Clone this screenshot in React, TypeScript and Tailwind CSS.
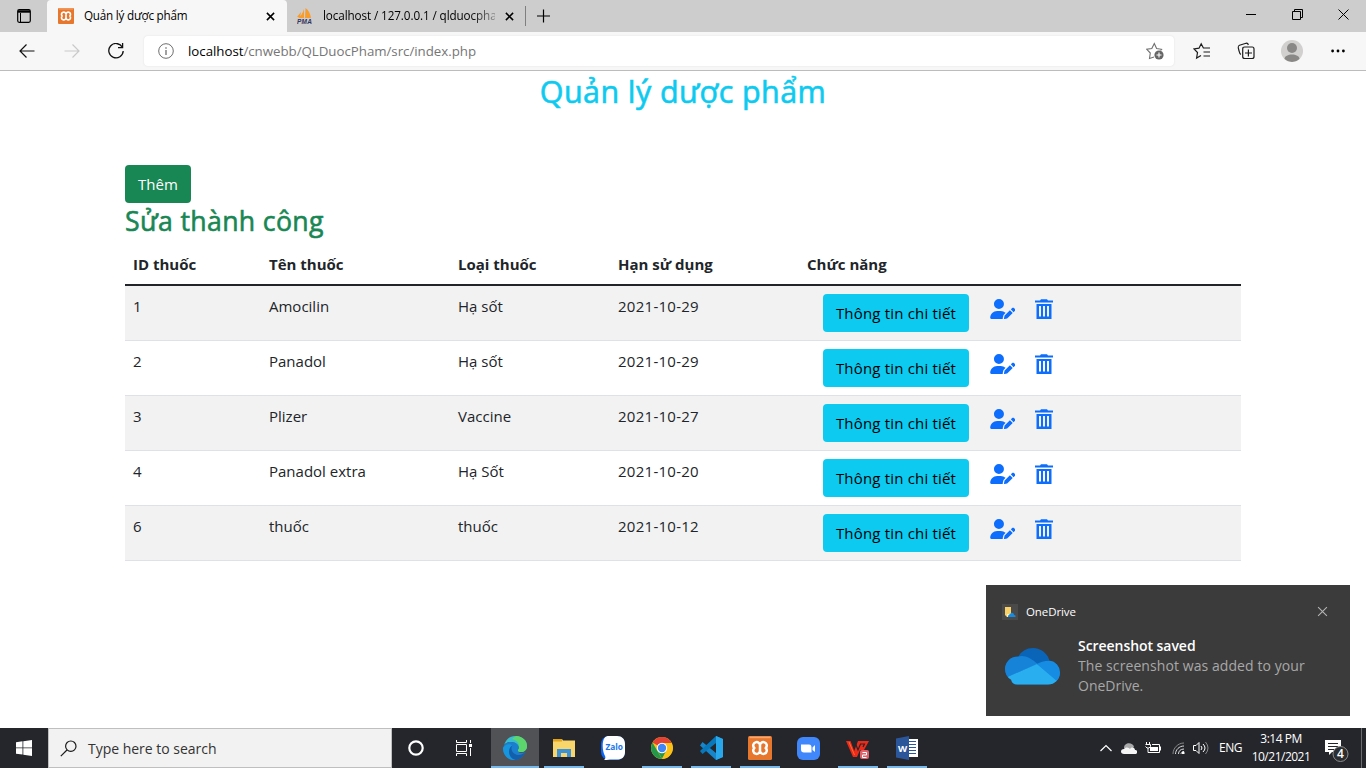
import React from 'react';
import { FaUserPen } from 'react-icons/fa6';

const rows = [
  { id: '1', name: 'Amocilin', kind: 'Hạ sốt', date: '2021-10-29' },
  { id: '2', name: 'Panadol', kind: 'Hạ sốt', date: '2021-10-29' },
  { id: '3', name: 'Plizer', kind: 'Vaccine', date: '2021-10-27' },
  { id: '4', name: 'Panadol extra', kind: 'Hạ Sốt', date: '2021-10-20' },
  { id: '6', name: 'thuốc', kind: 'thuốc', date: '2021-10-12' },
];

const columns = 'grid grid-cols-[136px_189px_160px_189px_1fr]';

function XamppIcon({ className }: { className: string }) {
  return (
    <svg className={className} viewBox="0 0 24 24">
      <rect width="24" height="24" rx="1.5" fill="#e8772e" />
      <rect x="1.5" y="0.6" width="21" height="1.6" fill="#f6a873" />
      <path
        d="M12 10A3.400 3.400 0 1 0 6.300 12A3.400 3.400 0 1 0 12 14A3.400 3.400 0 1 0 17.700 12A3.400 3.400 0 1 0 12 10v4"
        fill="none"
        stroke="#fff"
        strokeWidth="2.500"
        strokeLinejoin="round"
      />
    </svg>
  );
}

function CloseIcon({ className }: { className: string }) {
  return (
    <svg className={className} viewBox="0 0 10 10" fill="none" stroke="currentColor">
      <path d="M1 1l8 8M9 1l-8 8" />
    </svg>
  );
}

function TrashIcon() {
  return (
    <svg className="ml-5 h-5 w-[18px]" viewBox="0 0 18 20" fill="#0d6efd">
      <path d="M6 .3h6l1 1.200h5v2H0v-2h5zM1.500 5h15v15h-15zM4 7v10.500h2V7zm4 0v10.500h2V7zm4 0v10.500h2V7z" fillRule="evenodd" />
    </svg>
  );
}

function TabBar() {
  return (
    <div className="flex h-8 shrink-0 bg-[#cdcdcd] text-black">
      <div className="flex w-[47px] shrink-0 items-center pl-[17px]">
        <svg className="h-[14px] w-[14px]" viewBox="0 0 14 14" fill="none" stroke="#000">
          <rect x=".7" y=".7" width="12.600" height="12.600" rx="1.500" strokeWidth="1.200" />
          <path d="M1 2.500h12" strokeWidth="2.400" />
          <path d="M3.500 4v9" />
        </svg>
      </div>
      <div className="flex w-[240px] shrink-0 items-center rounded-t-[4px] bg-[#f7f7f7] pl-[11px]">
        <XamppIcon className="h-4 w-4" />
        <span className="ml-[10px] w-[182px] whitespace-nowrap text-[11.700px] tracking-[-0.22px]">Quản lý dược phẩm</span>
        <CloseIcon className="h-[9px] w-[9px] stroke-[1.700]" />
      </div>
      <div className="flex w-[238px] shrink-0 items-center pl-[10px]">
        <svg className="h-4 w-4" viewBox="0 0 16 16">
          <path d="M7 1v9H1c3-2 5-5 6-9zM8.500 0c3 2 5 6 5.500 10H8zM4 4L3 9H0z" fill="#f89c2c" />
          <text x="0" y="15.500" fontSize="6.500" fontWeight="700" fontStyle="italic" fill="#34345c" textLength="15" fontFamily="Liberation Sans">PMA</text>
        </svg>
        <span className="ml-[10px] w-[172px] whitespace-nowrap text-[11.700px] tracking-[-0.100px] [mask-image:linear-gradient(to_right,#000_86%,transparent_106%)]">
          localhost / 127.0.0.1 / qlduocpha
        </span>
        <CloseIcon className="ml-[10px] h-[9px] w-[9px] stroke-[1.700]" />
      </div>
      <div className="flex flex-1 items-center">
        <div className="h-5 w-px bg-[#7f7f7f]" />
        <svg className="ml-[11px] h-[14px] w-[14px]" viewBox="0 0 14 14" stroke="#000" strokeWidth="1.200">
          <path d="M6.500 .5v13M0 7h13" />
        </svg>
      </div>
      <div className="flex shrink-0 items-center pb-[3px]">
        <div className="mr-[36px] h-px w-[10px] bg-black" />
        <svg className="mr-[35px] h-[11px] w-[11px]" viewBox="0 0 11 11" fill="none" stroke="#000">
          <path d="M.5 2.500h8v8h-8zM2.500 2.500v-2h8v8h-2" />
        </svg>
        <svg className="mr-[17px] h-[11px] w-[11px]" viewBox="0 0 11 11" stroke="#000">
          <path d="M.5 .5l10 10M10.500 .5l-10 10" />
        </svg>
      </div>
    </div>
  );
}

function AddressBar() {
  return (
    <div className="flex h-[39px] shrink-0 items-center border-b border-[#bcbcbc] bg-[#f7f7f7] pl-[19px]">
      <svg className="h-4 w-4" viewBox="0 0 16 16" fill="none" stroke="#111" strokeWidth="1.200">
        <path d="M15.500 8H1M7.500 1.500L1 8l6.500 6.500" />
      </svg>
      <svg className="ml-[29px] h-4 w-4" viewBox="0 0 16 16" fill="none" stroke="#c9c9c9" strokeWidth="1.200">
        <path d="M.5 8H15M8.500 1.500L15 8l-6.500 6.500" />
      </svg>
      <svg className="ml-[28px] h-4 w-4" viewBox="0 0 16 16" fill="none" stroke="#111" strokeWidth="1.300">
        <path d="M14.200 4A7.200 7.200 0 1 0 15.200 8M14.600 0v4.600H10" />
      </svg>
      <div className="ml-[20px] flex h-[30px] w-[1030px] items-center rounded-[4px] bg-white pl-[14px] shadow-[0_0_2px_rgba(0,0,0,0.100)]">
        <svg className="h-4 w-4" viewBox="0 0 16 16" fill="none" stroke="#6e6e6e">
          <circle cx="8" cy="8" r="7.300" />
          <path d="M8 7v5M8 4.200v1.500" strokeWidth="1.300" />
        </svg>
        <span className="mt-px ml-[14px] whitespace-nowrap text-[13.300px] tracking-[-0.030px] text-[#767676]">
          <span className="text-black">localhost</span>/cnwebb/QLDuocPham/src/index.php
        </span>
        <svg className="mr-[10px] ml-auto h-[18px] w-[18px]" viewBox="0 0 18 18" fill="none" stroke="#707070" strokeWidth="1.100">
          <path d="M8 15l-4.500 1.500L4.300 11 .8 7.300l5-.8L8.300 1.500l2.300 5 5 .8-1 1.200" />
          <circle cx="13" cy="13" r="4.600" fill="#666" stroke="none" />
          <path d="M13 10.500v5M10.500 13h5" stroke="#fff" />
        </svg>
      </div>
      <svg className="ml-[19px] h-[18px] w-[18px]" viewBox="0 0 18 18" fill="none" stroke="#1b1b1b" strokeWidth="1.200">
        <path d="M8 13.500L3.600 16l.9-5.500L1 7l5-.8L8.200 1.800 10.400 6H17M10.500 10H17M10.500 14H17" />
      </svg>
      <svg className="ml-[26px] h-[18px] w-[18px]" viewBox="0 0 18 18" fill="none" stroke="#1b1b1b" strokeWidth="1.200">
        <path d="M4 12.500C2.500 12 2.400 10 1.700 7.500 1 5 .6 4 2.500 3.300L9 1.300c1.500-.4 2 .5 2.300 1.700M5.700 7c0-1.500.5-2 2-2h7.500c1.400 0 1.800.6 1.800 2v7.500c0 1.400-.4 2-1.800 2H7.700c-1.500 0-2-.6-2-2zM11.400 7.500v7M8 11h7" />
      </svg>
      <svg className="ml-[26px] h-[22px] w-[22px]" viewBox="0 0 22 22">
        <circle cx="11" cy="11" r="11" fill="#d2d0ce" />
        <circle cx="11" cy="8" r="5" fill="#8a8886" />
        <path d="M3.500 19c0-6 15-6 15 0a11 11 0 0 1-15 0z" fill="#8a8886" />
      </svg>
      <svg className="ml-[28px] h-1 w-[14px]" viewBox="0 0 14 4">
        <circle cx="1.600" cy="2" r="1.400" />
        <circle cx="7" cy="2" r="1.400" />
        <circle cx="12.400" cy="2" r="1.400" />
      </svg>
    </div>
  );
}

function Cloud({ className }: { className: string }) {
  return (
    <svg className={className} viewBox="0 0 55 37">
      <defs>
        <clipPath id="cloud-shape">
          <circle cx="12.500" cy="21" r="12.500" />
          <circle cx="28" cy="17" r="17" />
          <circle cx="43" cy="24.500" r="12" />
          <rect x="6" y="20" width="42" height="16.500" rx="6" />
        </clipPath>
      </defs>
      <g clipPath="url(#cloud-shape)">
        <rect width="55" height="37" fill="#0a64b8" />
        <path d="M0 8.500h13c7-2 13 2 20 7.500L0 30z" fill="#1683d9" />
        <path d="M31 17c6-5 14-5 24-3v23L31 20z" fill="#168ce2" />
        <path d="M0 30L32 16l23 19v2H0z" fill="#29aeef" />
        <path d="M32 16l21 18 2-10-12-11z" fill="#168ce2" />
      </g>
    </svg>
  );
}

function Notification() {
  return (
    <div className="absolute top-[585px] left-[986px] h-[131px] w-[364px] bg-[#3b3b3b] text-white">
      <div className="flex h-[52px] items-center pl-4">
        <div className="mt-px flex h-4 w-4 items-center justify-center bg-[#4a4a4a]">
          <svg className="h-3 w-3" viewBox="0 0 12 12">
            <path d="M1 1h6v10H3L1 9z" fill="#f8d16b" />
            <path d="M3 11V8h3v3z" fill="#fff2b7" />
            <path d="M4 11c0-3 2-2 3-4 2-1 3 1 3 2 2 0 2 2 1 2z" fill="#168be1" />
          </svg>
        </div>
        <span className="mt-px ml-2 w-[290.500px] text-[11.500px] tracking-[-0.1px]">OneDrive</span>
        <CloseIcon className="h-[11px] w-[11px] text-[#b4b4b4]" />
      </div>
      <div className="flex">
        <Cloud className="mt-[11px] ml-[18.500px] h-[37px] w-[55px] shrink-0" />
        <div className="mt-[-1px] ml-[18.500px] text-[14px] leading-5 whitespace-nowrap">
          <p className="font-semibold tracking-[-0.050px]">Screenshot saved</p>
          <p className="tracking-[0.080px] text-[#a8a8a8]">The screenshot was added to your</p>
          <p className="text-[#a8a8a8]">OneDrive.</p>
        </div>
      </div>
    </div>
  );
}

function Slot({ children, running = false, active = false }: { children: React.ReactNode; running?: boolean; active?: boolean }) {
  return (
    <div className={active ? 'flex w-12 flex-col items-center bg-[#505256]' : 'flex w-[49px] flex-col items-center'}>
      <div className="flex h-[38px] items-center pt-[2px]">{children}</div>
      {running && <div className={active ? 'h-[2px] w-full bg-[#76b9ed]' : 'h-[2px] w-[40px] bg-[#76b9ed]'} />}
    </div>
  );
}

function Taskbar() {
  return (
    <div className="flex h-10 shrink-0 bg-[#24262b] text-white">
      <div className="flex w-12 items-center pl-4">
        <svg className="h-4 w-4" viewBox="0 0 16 16" fill="#fff">
          <path d="M0 2.200L6.500 1.300v6.200H0zM7.300 1.200L16 0v7.500H7.300zM0 8.300h6.500v6.300L0 13.700zM7.300 8.300H16V16l-8.700-1.200z" />
        </svg>
      </div>
      <div className="flex w-[344px] items-center border border-[#bfbfbf] bg-[#f2f2f2] pl-[11px]">
        <svg className="h-[17px] w-[17px]" viewBox="0 0 17 17" fill="none" stroke="#1b1b1b" strokeWidth="1.200">
          <circle cx="10.800" cy="6.200" r="5.200" />
          <path d="M7 10L.8 16.200" />
        </svg>
        <span className="ml-[11px] text-[14px] tracking-[-0.020px] text-[#333]">Type here to search</span>
      </div>
      <div className="flex w-[48px] items-center justify-center">
        <svg className="h-4 w-4" viewBox="0 0 16 16"><circle cx="8" cy="8" r="6.700" fill="none" stroke="#fff" strokeWidth="2.200" /></svg>
      </div>
      <div className="flex w-[51px] items-center pl-4">
        <svg className="h-4 w-4" viewBox="0 0 16 16" fill="none" stroke="#fff">
          <path d="M.5 0v2.500h10V0M.5 16v-2.500h10V16M.5 4.500h10v7H.5zM14.500 0v3M14.500 8v8" />
          <path d="M13 4h3v3h-3z" fill="#fff" stroke="none" />
        </svg>
      </div>
      <Slot running active>
        <svg className="h-6 w-6" viewBox="0 0 24 24">
          <path d="M1 9C3 3 7 0 12 0c7 0 12 4.500 12 10 0 4-3 6-6 6-2.500 0-4-1-3-2.500C17 9 12 6 8 6 5 6 2.500 7 1 9z" fill="#38bdd0" />
          <path d="M13 0c7 .5 11 4.500 11 10 0 4-3 6-6 6-2.500 0-4-1-3-2.500C17 9 16 5 9 3z" fill="#5cd66c" />
          <path d="M0 12C1 8 4 6 8 6c5 0 8 3 8 6 0 1-1.200 1.500-1.200 2.500C14.800 17 19 18 22.500 16 20 21 16 24 12 24 5 24 0 19 0 12z" fill="#1b7fcf" />
          <path d="M9 9.500C5 12 6 22 13 23.900 5 25 0 19 0 12 2 8 7 7 9 9.500z" fill="#1796e0" />
          <path d="M9.500 9.500C7 12 9 18.500 15 19c3 0 5-1 7.500-3C20 21 17 23.500 13 23.900 5 23 4 12 9.500 9.500z" fill="#135fac" />
        </svg>
      </Slot>
      <Slot running>
        <svg className="h-[18px] w-[22px]" viewBox="0 0 22 18">
          <path d="M0 0h9l1 1.500h12V18H0z" fill="#f9d66b" />
          <path d="M0 0h9v2.500H0z" fill="#e5a416" />
          <path d="M4 18v-8h14v8h-4v-4H8v4z" fill="#3d91d5" />
        </svg>
      </Slot>
      <Slot>
        <svg className="h-6 w-6" viewBox="0 0 24 24">
          <rect width="24" height="24" rx="8" fill="#0966f7" />
          <path d="M8 0h8c5 0 8 3 8 8v8c0 5-3 7.500-8 7.500H9c-2 0-3 .8-6 .5 1.500-1 1.700-2.500 1-4C1 15 1 5 3.500 2 4.500.6 6 0 8 0z" fill="#fff" />
          <text x="4.500" y="14" fontSize="9" fontWeight="700" textLength="17.500" lengthAdjust="spacingAndGlyphs" fill="#1676ef" fontFamily="Open Sans">Zalo</text>
        </svg>
      </Slot>
      <Slot running>
        <svg className="h-[22px] w-[22px]" viewBox="0 0 22 22">
          <circle cx="11" cy="11" r="11" fill="#fbc116" />
          <path d="M11 11L1.500 5.500a11 11 0 0 1 19 0z" fill="#e44234" />
          <path d="M1.500 5.500L11 22A11 11 0 0 1 1.500 5.500z" fill="#24984a" />
          <path d="M6.500 13.500L11 22l5-8.500z" fill="#24984a" />
          <path d="M15 14l-4 8a11 11 0 0 0 9.500-16H11z" fill="#fbc116" />
          <circle cx="11" cy="11" r="5.200" fill="#fff" />
          <circle cx="11" cy="11" r="4.200" fill="#4285f4" />
        </svg>
      </Slot>
      <Slot running>
        <svg className="h-6 w-6" viewBox="0 0 24 24">
          <path d="M17 0l7 3v18l-7 3L1 9.500 3.500 6 17 17z" fill="#1685ca" />
          <path d="M17 0v7L3.500 18 1 15z" fill="#0878bd" />
          <path d="M17 0l7 3v18l-7 3z" fill="#28a8ea" />
        </svg>
      </Slot>
      <Slot running><XamppIcon className="h-6 w-6" /></Slot>
      <Slot>
        <svg className="h-[23px] w-[23px]" viewBox="0 0 23 23">
          <rect width="23" height="23" rx="6" fill="#4087fc" />
          <path d="M4 7.500h8q2.500 0 2.500 3v5H7q-3 0-3-3zM15.500 10.500l2.500-2.500v7l-2.500-2z" fill="#fff" />
        </svg>
      </Slot>
      <Slot running>
        <svg className="mt-1 h-5 w-[23px]" viewBox="0 0 23 20">
          <path d="M0 1h4.500l3.700 10L12 1h11l-5 9h-4l-3 7H7z" fill="#f02a18" />
          <path d="M8.500 1l3.500 9 2.500-6h4l-1.500 3" fill="none" stroke="#24262b" strokeWidth="1.200" />
          <path d="M3 2l5.500 13" fill="none" stroke="#ff6a32" strokeWidth="1" />
          <rect x="14" y="10" width="9" height="9" rx="2" fill="#e0606a" />
          <path d="M16.500 12.500h4V15h-4v2.500h4" fill="none" stroke="#fff" />
        </svg>
      </Slot>
      <Slot running>
        <svg className="h-6 w-6" viewBox="0 0 24 24">
          <path d="M11 3h12v18H11z" fill="#fff" />
          <path d="M14 5.500h7M14 8.500h7M14 11.500h7M14 14.500h7M14 17.500h7" stroke="#2b579a" />
          <path d="M1 2.500L14 0v24L1 21.500z" fill="#2b579a" />
          <text x="3" y="15.500" fontSize="9.500" fontWeight="700" fill="#fff" fontFamily="Open Sans">W</text>
        </svg>
      </Slot>
      <div className="ml-auto flex items-center">
        <svg className="h-2 w-3" viewBox="0 0 12 8" fill="none" stroke="#fff" strokeWidth="1.200"><path d="M.5 7L6 1.500 11.500 7" /></svg>
        <svg className="ml-[9px] h-[11px] w-4" viewBox="0 0 16 11">
          <path d="M3 5C3-1 12-1 13 4l-6 5z" fill="#a9a9a9" />
          <path d="M3 11c-4 0-4-5 0-5 3-3 5-1 6 0 2-3 5-1 5 1 3 0 3 4 0 4z" fill="#f5f5f5" />
        </svg>
        <svg className="ml-2 h-3 w-4" viewBox="0 0 16 12" fill="none" stroke="#fff">
          <path d="M1.500 0v2M4.500 0v2M.5 2.500h5v2L4 6H2L.5 4.500M3 6v4.500h11.500v-8H7M15.500 4.500v4" />
          <path d="M5 5h8v4H5z" fill="#fff" stroke="none" />
        </svg>
        <svg className="ml-[11px] h-3 w-[13px]" viewBox="0 0 13 12" fill="none" stroke="#ddd">
          <path d="M1 12C1 6 6 1 12 1" stroke="#888" /><path d="M3.500 12C3.500 8 7 4 12 4M6.500 12c0-3 2-5 5.500-5M9 12c0-1 1-2.500 3-2.500" />
          <circle cx="11.200" cy="11" r="1.400" fill="#fff" stroke="none" />
        </svg>
        <svg className="ml-2 h-[14px] w-4" viewBox="0 0 16 14" fill="none" stroke="#fff">
          <path d="M.5 4.500h2.500l3-3v11l-3-3H.500zM8 5q2 2 0 4M10 3q4 4 0 8" /><path d="M12.500 1q5 6 0 12" stroke="#888" />
        </svg>
        <span className="ml-[10px] w-[24px] text-[12px] tracking-[-0.500px]">ENG</span>
        <div className="ml-[8px] w-[60px] text-center text-[12px] leading-[18px] tracking-[-0.500px] whitespace-nowrap"><div>3:14 PM</div><div>10/21/2021</div></div>
        <svg className="ml-[13px] h-[27px] w-[25px]" viewBox="0 0 25 27">
          <path d="M1 5h16v12H8l-3 3v-3H1z" fill="#fff" />
          <path d="M4 8.500h10M4 11.500h10M4 14.500h6" stroke="#24262b" />
          <circle cx="16.500" cy="19" r="7.500" fill="#2c2e32" stroke="#8d8d8d" />
          <text x="16.500" y="23.300" fontSize="12" fontWeight="600" textAnchor="middle" fill="#fff" fontFamily="Open Sans">4</text>
        </svg>
        <div className="mr-1 ml-[12px] h-10 w-px bg-[#6b6c6f]" />
      </div>
    </div>
  );
}

export default function App() {
  return (
    <div className="relative flex h-[768px] w-[1366px] flex-col overflow-hidden bg-white font-['Open_Sans','Noto_Sans',sans-serif]">
      <TabBar />
      <AddressBar />
      <main className="mx-[125px] flex-1 text-[#212529]">
        <h1 className="h-[94px] pt-px text-center text-[30.500px] leading-[38px] tracking-[0.400px] text-[#0dcaf0] [-webkit-text-stroke:0.600px_#0dcaf0]">Quản lý dược phẩm</h1>
        <button className="block h-[38px] w-[66px] rounded-[4px] bg-[#198754] text-[15px] text-white">Thêm</button>
        <h2 className="mt-px h-[41px] text-[26.700px] leading-[34px] tracking-[0.340px] text-[#198754] [-webkit-text-stroke:0.600px_#198754]">Sửa thành công</h2>
        <div className={`${columns} h-[41px] border-b-2 border-[#212529] pl-2 text-[15px] leading-[38px] font-bold`}>
          <span>ID thuốc</span><span>Tên thuốc</span><span>Loại thuốc</span><span>Hạn sử dụng</span><span>Chức năng</span>
        </div>
        {rows.map((row) => (
          <div key={row.id} className={`${columns} h-[55px] border-b border-[#dee2e6] pt-2 pl-2 text-[15px] leading-[24px] odd:bg-[#f2f2f2] even:bg-white`}>
            <span>{row.id}</span><span>{row.name}</span><span>{row.kind}</span><span className="tracking-[0.270px]">{row.date}</span>
            <div className="flex items-start">
              <button className="ml-4 h-[38px] w-[146px] rounded-[4px] bg-[#0dcaf0] text-[15px] tracking-[0.180px] whitespace-nowrap text-black">Thông tin chi tiết</button>
              <div className="mt-[5px] ml-[20.600px] flex">
                <FaUserPen className="h-5 w-[25.400px]" color="#0d6efd" />
                <TrashIcon />
              </div>
            </div>
          </div>
        ))}
      </main>
      <Taskbar />
      <Notification />
    </div>
  );
}
